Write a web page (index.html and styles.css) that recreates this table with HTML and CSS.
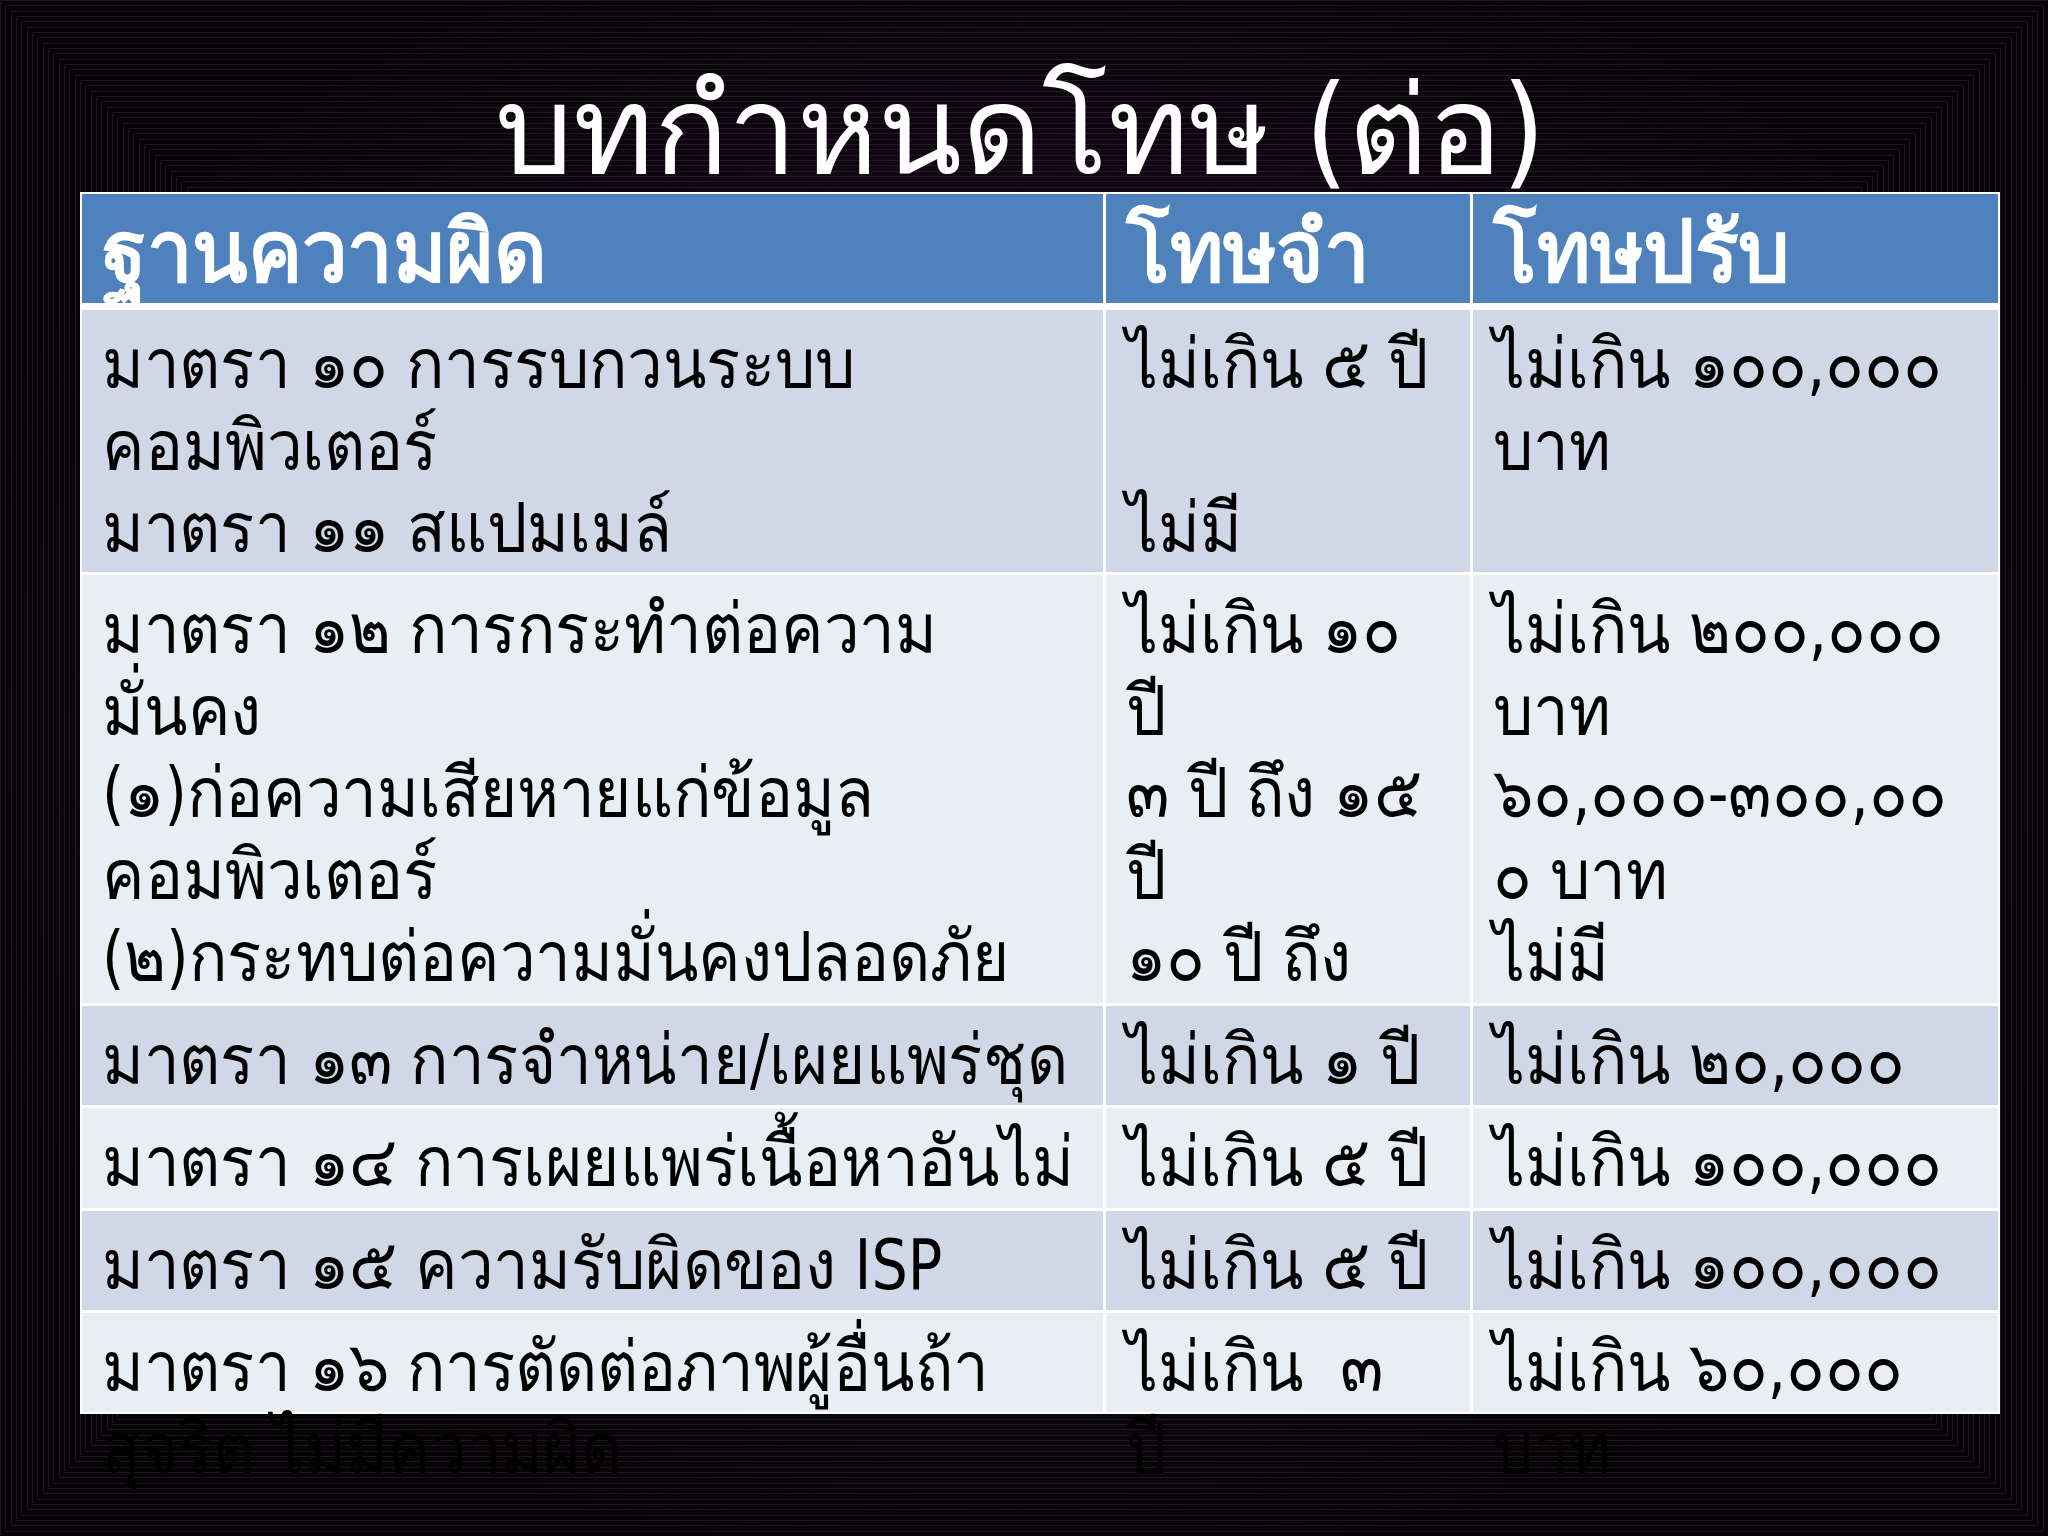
FILE: index.html
```html
<!DOCTYPE html>
<html lang="th">
<head>
<meta charset="utf-8">
<title>บทกำหนดโทษ (ต่อ)</title>
<link rel="stylesheet" href="styles.css">
</head>
<body>
<div class="slide">
  <div class="bg bg-v"></div>
  <div class="bg bg-h"></div>
  <div class="content">
    <h1 class="title">บทกำหนดโทษ (ต่อ)</h1>
    <div class="table">
      <div class="cell head"><span class="t">ฐานความผิด</span></div>
      <div class="cell head"><span class="t">โทษจำ</span></div>
      <div class="cell head"><span class="t">โทษปรับ</span></div>

      <div class="cell odd"><span class="t">มาตรา ๑๐ การรบกวนระบบ<br>คอมพิวเตอร์<br>มาตรา ๑๑ สแปมเมล์</span></div>
      <div class="cell odd"><span class="t">ไม่เกิน ๕ ปี<br>&nbsp;<br>ไม่มี</span></div>
      <div class="cell odd"><span class="t">ไม่เกิน ๑๐๐,๐๐๐<br>บาท</span></div>

      <div class="cell even"><span class="t">มาตรา ๑๒ การกระทำต่อความ<br>มั่นคง<br>(๑)ก่อความเสียหายแก่ข้อมูล<br>คอมพิวเตอร์<br>(๒)กระทบต่อความมั่นคงปลอดภัย</span></div>
      <div class="cell even"><span class="t">ไม่เกิน ๑๐<br>ปี<br>๓ ปี ถึง ๑๕<br>ปี<br>๑๐ ปี ถึง</span></div>
      <div class="cell even"><span class="t">ไม่เกิน ๒๐๐,๐๐๐<br>บาท<br>๖๐,๐๐๐-๓๐๐,๐๐<br>๐ บาท<br>ไม่มี</span></div>

      <div class="cell odd"><span class="t">มาตรา ๑๓ การจำหน่าย/เผยแพร่ชุด</span></div>
      <div class="cell odd"><span class="t">ไม่เกิน ๑ ปี</span></div>
      <div class="cell odd"><span class="t">ไม่เกิน ๒๐,๐๐๐</span></div>

      <div class="cell even"><span class="t">มาตรา ๑๔ การเผยแพร่เนื้อหาอันไม่</span></div>
      <div class="cell even"><span class="t">ไม่เกิน ๕ ปี</span></div>
      <div class="cell even"><span class="t">ไม่เกิน ๑๐๐,๐๐๐</span></div>

      <div class="cell odd"><span class="t">มาตรา ๑๕ ความรับผิดของ ISP</span></div>
      <div class="cell odd"><span class="t">ไม่เกิน ๕ ปี</span></div>
      <div class="cell odd"><span class="t">ไม่เกิน ๑๐๐,๐๐๐</span></div>

      <div class="cell even last"><span class="t">มาตรา ๑๖ การตัดต่อภาพผู้อื่นถ้า<br>สุจริต ไม่มีความผิด</span></div>
      <div class="cell even last"><span class="t">ไม่เกิน &nbsp;๓<br>ปี</span></div>
      <div class="cell even last"><span class="t">ไม่เกิน ๖๐,๐๐๐<br>บาท</span></div>
    </div>
  </div>
</div>
</body>
</html>
```
FILE: styles.css
```css
html, body {
  margin: 0;
  padding: 0;
  background: #000;
}

.slide {
  width: 2048px;
  height: 1536px;
  display: grid;
  overflow: hidden;
  font-family: "DejaVu Sans Condensed", "DejaVu Sans", sans-serif;
}

.bg,
.content {
  grid-area: 1 / 1;
}

.bg {
  background-color: #060406;
}

.bg-v {
  background-image:
    repeating-linear-gradient(to right, rgba(255,255,255,0.08) 0, rgba(255,255,255,0.08) 1px, transparent 1px, transparent 5.3333px),
    radial-gradient(ellipse 55% 55% at 50% 48%, #231028 0%, #150918 45%, #060306 100%);
  clip-path: polygon(0 0, 768px 768px, 1280px 768px, 100% 0, 100% 100%, 1280px 768px, 768px 768px, 0 100%);
}

.bg-h {
  background-image:
    repeating-linear-gradient(to bottom, rgba(255,255,255,0.08) 0, rgba(255,255,255,0.08) 1px, transparent 1px, transparent 5.3333px),
    radial-gradient(ellipse 55% 55% at 50% 48%, #231028 0%, #150918 45%, #060306 100%);
  clip-path: polygon(0 0, 100% 0, 1280px 768px, 100% 100%, 0 100%, 768px 768px);
}

.content {
  position: relative;
  z-index: 1;
  display: flex;
  flex-direction: column;
  padding: 0 48px 0 80px;
}

.title {
  margin: 0;
  height: 192px;
  display: flex;
  align-items: flex-end;
  justify-content: center;
  color: #fff;
  font-weight: normal;
  font-size: 123px;
  line-height: 1;
  padding-right: 40px;
  box-sizing: border-box;
}

.table {
  width: 1920px;
  box-sizing: border-box;
  display: grid;
  grid-template-columns: 1021px 364px 525px;
  grid-template-rows: 113px 262px 428px 99px 100px 99px 99px;
  column-gap: 3px;
  row-gap: 3px;
  padding: 2px;
  background: #fff;
}

.cell {
  box-sizing: border-box;
  padding: 13px 0 0 20px;
  font-size: 70px;
  line-height: 82px;
  color: #000;
  white-space: nowrap;
  overflow: hidden;
}

.t {
  display: inline-block;
  transform: scaleX(0.91);
  transform-origin: 0 0;
}

.head {
  height: 109px;
  background: #4f81bd;
  color: #fff;
  font-weight: bold;
  font-size: 84px;
  padding-top: 17px;
}

.head .t {
  transform: scaleX(0.97);
}

.odd {
  background: #d0d8e8;
}

.even {
  background: #e9edf4;
}

.last {
  overflow: visible;
}
```
